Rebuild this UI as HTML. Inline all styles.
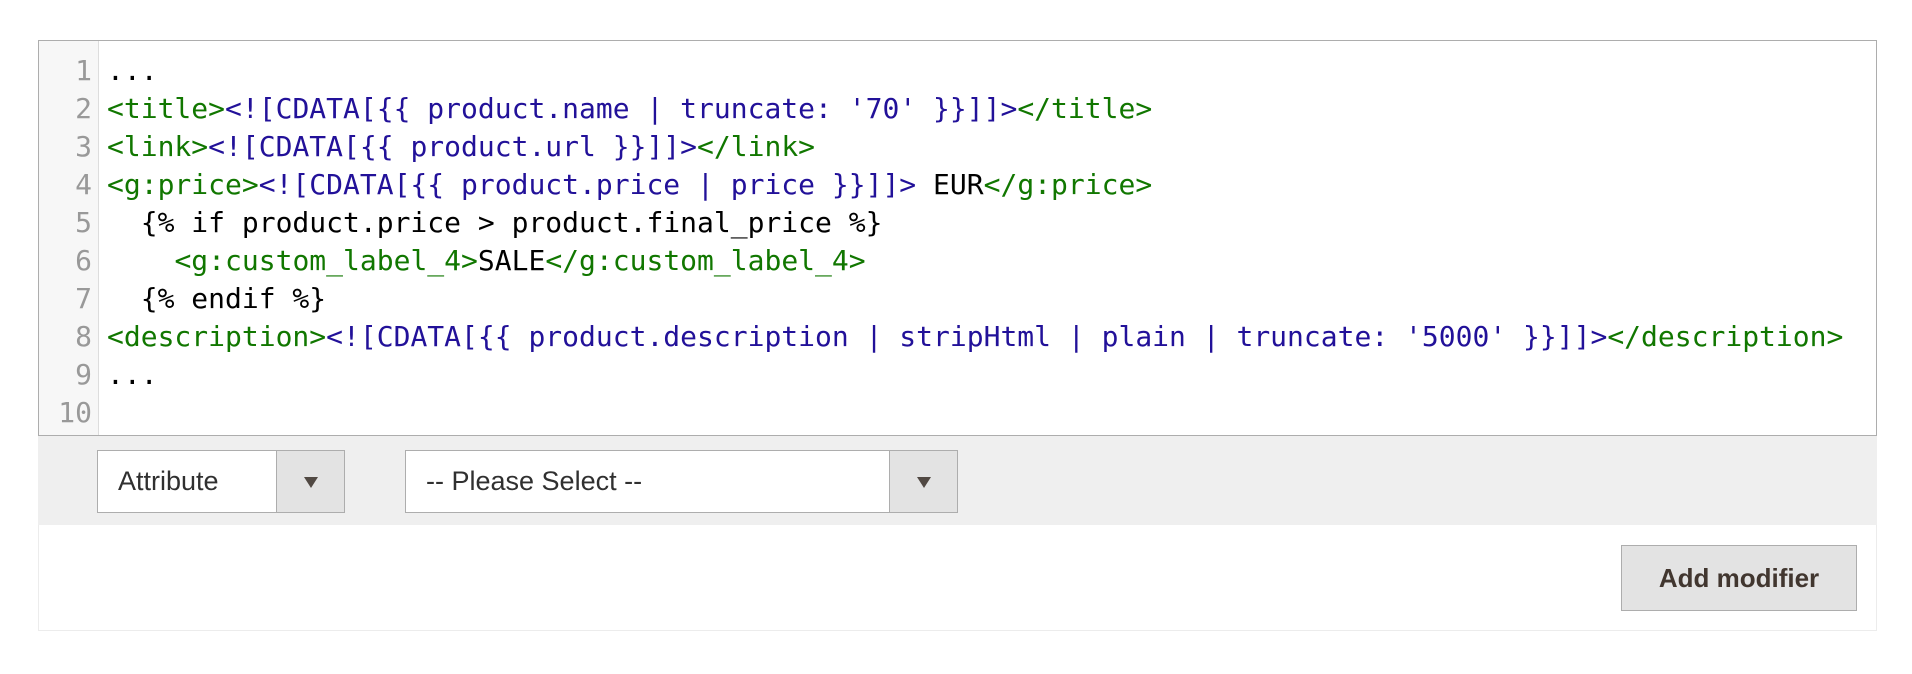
<!DOCTYPE html>
<html><head><meta charset="utf-8"><style>
body{margin:0;width:1912px;height:674px;background:#fff;position:relative;overflow:hidden;font-family:"Liberation Sans",sans-serif}
.ed{position:absolute;left:38px;top:40px;width:1837px;height:394px;border:1px solid #adadad;background:#fff;overflow:hidden}
.gut{position:absolute;left:0;top:0;width:59px;height:100%;background:#f7f7f7;border-right:1px solid #ddd}
.ln,.code{position:absolute;top:11px;font-family:"DejaVu Sans Mono",monospace;font-size:28px;line-height:38px;white-space:pre}
.ln{left:0;width:53px;text-align:right;color:#999}
.code{left:68px;color:#000}
.t{color:#170}.b{color:#219}
.bar{position:absolute;left:38px;top:436px;width:1839px;height:89px;background:#efefef}
.low{position:absolute;left:38px;top:525px;width:1837px;height:105px;border:1px solid #ececec;border-top:none}
.sel{position:absolute;top:450px;height:61px;border:1px solid #adadad;background:#fff;font-size:27px;color:#303030;line-height:61px;box-sizing:content-box}
.sel span{position:absolute;left:20px}
.arr{position:absolute;right:0;top:0;bottom:0;background:#e3e3e3;border-left:1px solid #adadad}
.arr:after{content:"";position:absolute;left:50%;top:50%;margin:-5px 0 0 -7px;border-left:7px solid transparent;border-right:7px solid transparent;border-top:11px solid #514943}
.btn{position:absolute;left:1621px;top:545px;width:234px;height:64px;border:1px solid #adadad;background:#e3e3e3;color:#41362f;font-weight:bold;font-size:26px;text-align:center;line-height:64px}
</style></head><body>
<div class="ed"><div class="gut"></div>
<div class="ln">1
2
3
4
5
6
7
8
9
10</div>
<div class="code">...
<span class="t">&lt;title&gt;</span><span class="b">&lt;![CDATA[{{ product.name | truncate: '70' }}]]&gt;</span><span class="t">&lt;/title&gt;</span>
<span class="t">&lt;link&gt;</span><span class="b">&lt;![CDATA[{{ product.url }}]]&gt;</span><span class="t">&lt;/link&gt;</span>
<span class="t">&lt;g:price&gt;</span><span class="b">&lt;![CDATA[{{ product.price | price }}]]&gt;</span> EUR<span class="t">&lt;/g:price&gt;</span>
  {% if product.price &gt; product.final_price %}
    <span class="t">&lt;g:custom_label_4&gt;</span>SALE<span class="t">&lt;/g:custom_label_4&gt;</span>
  {% endif %}
<span class="t">&lt;description&gt;</span><span class="b">&lt;![CDATA[{{ product.description | stripHtml | plain | truncate: '5000' }}]]&gt;</span><span class="t">&lt;/description&gt;</span>
...
</div></div>
<div class="bar"></div>
<div class="low"></div>
<div class="sel" style="left:97px;width:246px"><span>Attribute</span><div class="arr" style="width:67px"></div></div>
<div class="sel" style="left:405px;width:551px"><span>-- Please Select --</span><div class="arr" style="width:67px"></div></div>
<div class="btn">Add modifier</div>
</body></html>
